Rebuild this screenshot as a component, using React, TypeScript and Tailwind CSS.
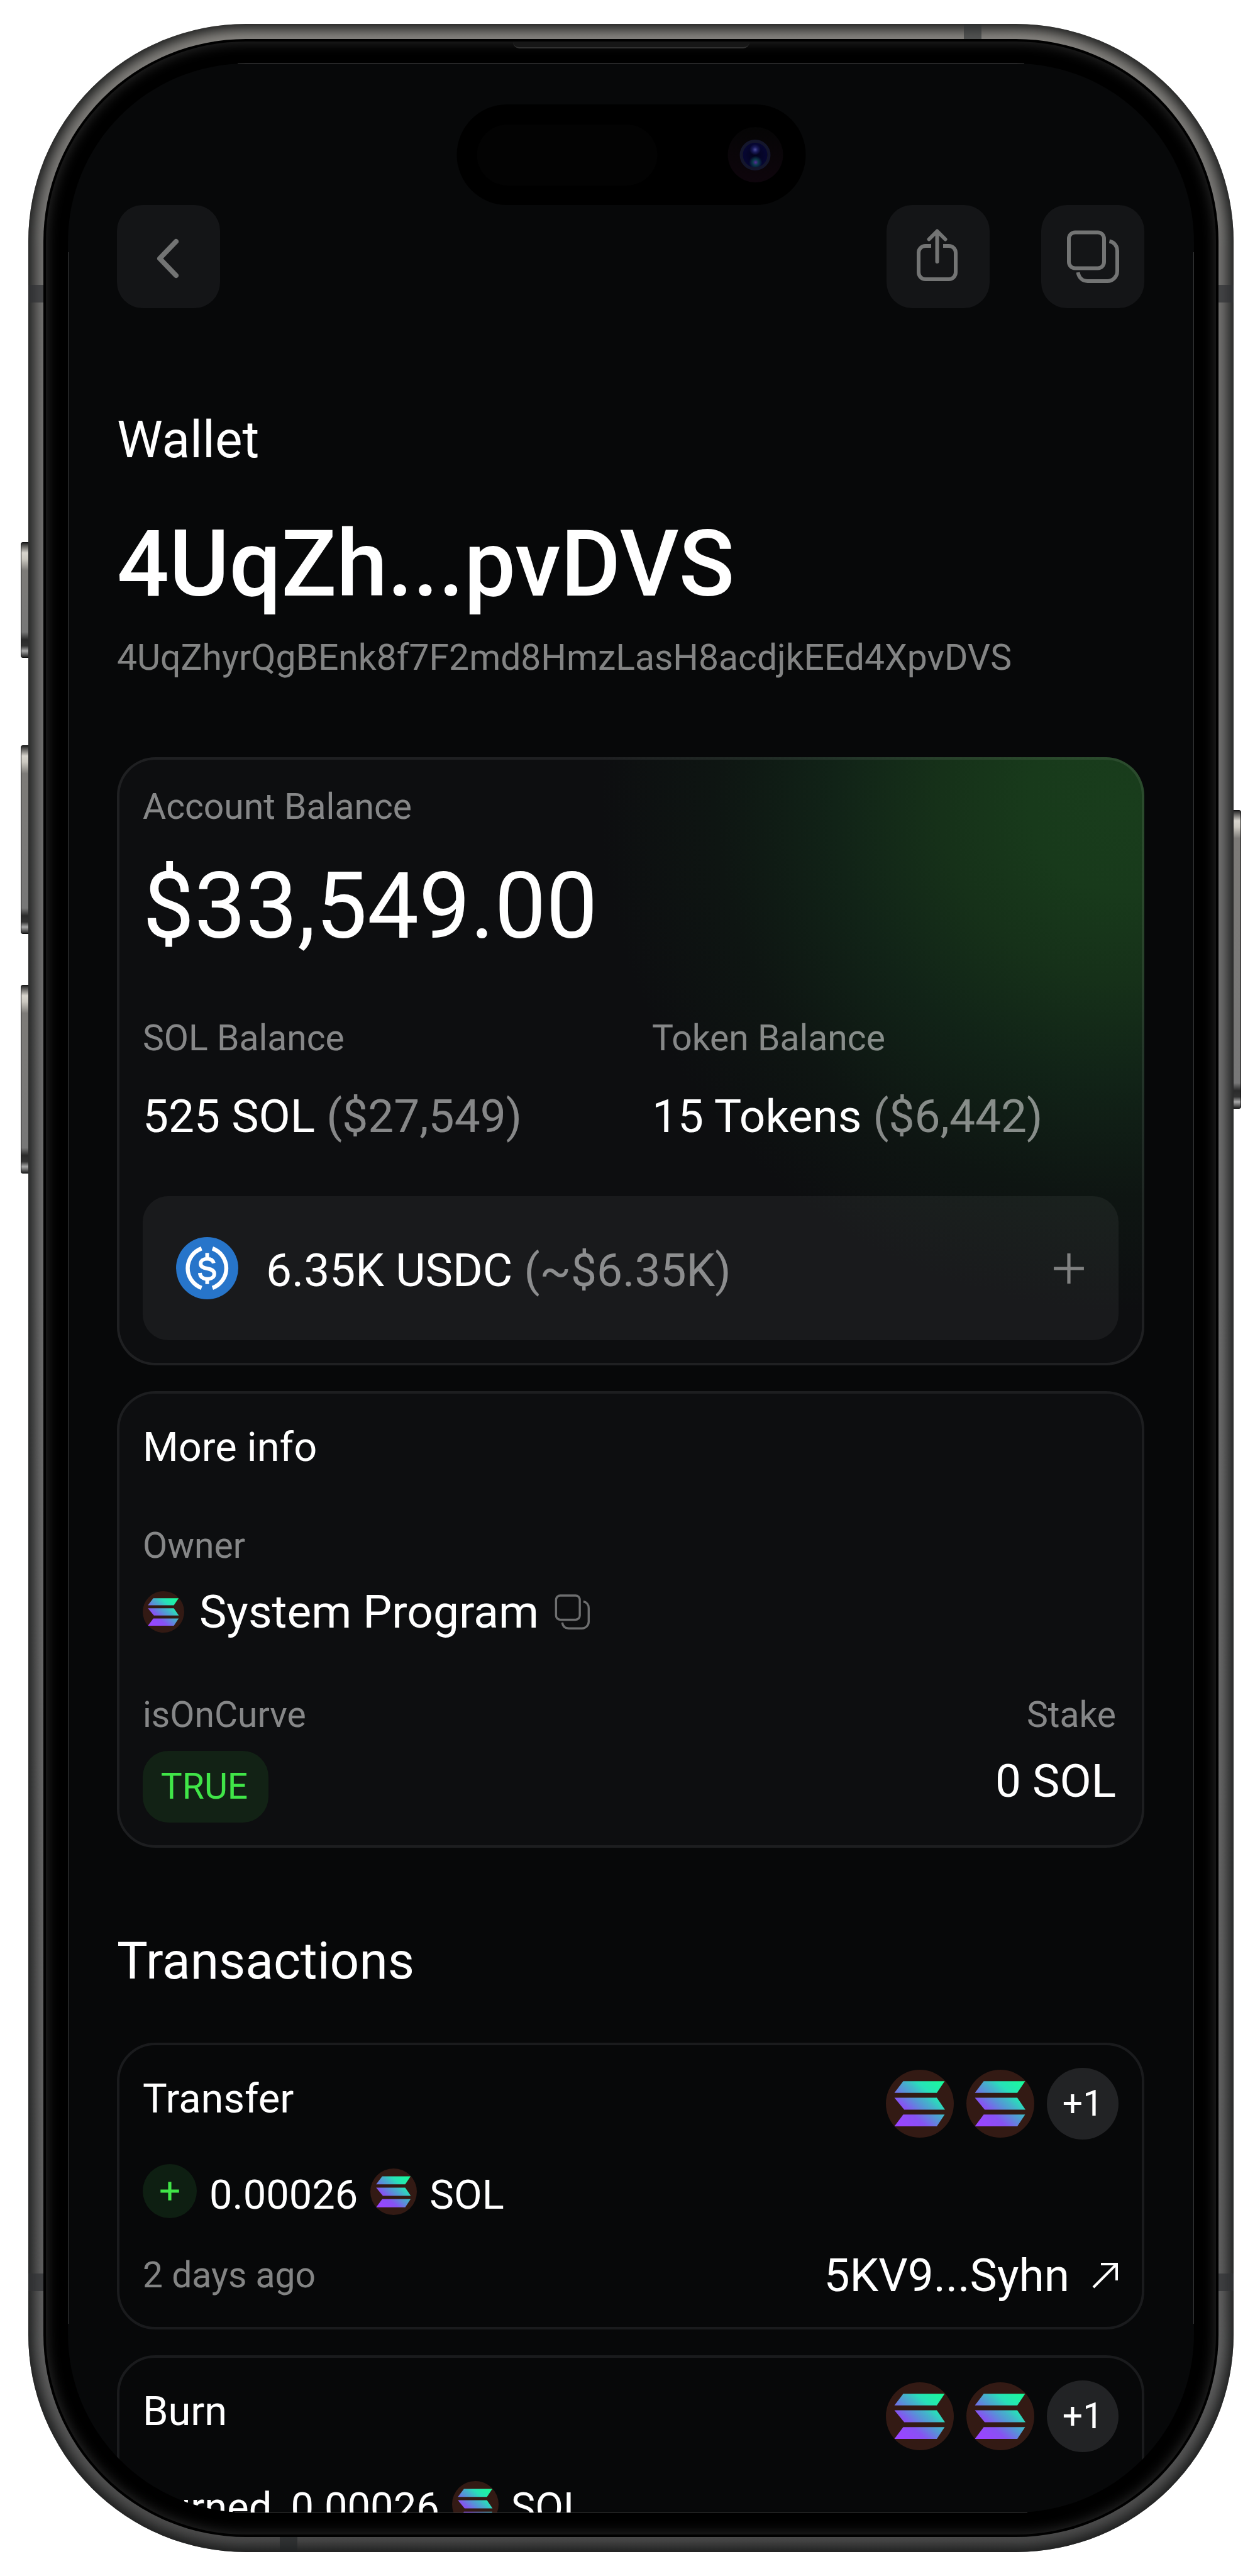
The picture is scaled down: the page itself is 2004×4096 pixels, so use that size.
import React from "react";

function ChevronIcon() {
  return (
    <svg viewBox="0 0 164 164" className="size-full" fill="none" stroke="currentColor" strokeWidth="8" strokeLinecap="round" strokeLinejoin="round" aria-hidden="true">
      <path d="M94 58L68 85L94 112" />
    </svg>
  );
}

function ShareIcon() {
  return (
    <svg viewBox="0 0 164 164" className="size-full" fill="none" stroke="currentColor" strokeWidth="6" aria-hidden="true">
      <path d="M71 65H62a11 11 0 0 0-11 11v31a11 11 0 0 0 11 11h37a11 11 0 0 0 11-11V76a11 11 0 0 0-11-11h-9" />
      <path d="M80.500 42V90M67.500 54.500L80.500 41.500L93.500 54.500" strokeLinecap="round" strokeLinejoin="round" />
    </svg>
  );
}

function CopyShape() {
  return (
    <>
      <rect x="44" y="43.500" width="56" height="57" rx="10" />
      <path d="M108.500 57.500C116 59 121 65 121 73V105a16 16 0 0 1-16 16H74C66 121 60 116 58.500 107" />
    </>
  );
}

function CopyIcon() {
  return (
    <svg viewBox="0 0 164 164" className="size-full" fill="none" stroke="currentColor" strokeWidth="6" aria-hidden="true">
      <CopyShape />
    </svg>
  );
}

function CopySmallIcon() {
  return (
    <svg viewBox="39 39 86 86" className="size-full" fill="none" stroke="currentColor" strokeWidth="5" aria-hidden="true">
      <CopyShape />
    </svg>
  );
}

function SolanaIcon({ id, className }: { id: string; className: string }) {
  return (
    <svg viewBox="0 0 100 100" className={className} role="img" aria-label="Solana">
      <defs>
        <linearGradient id={id} gradientUnits="userSpaceOnUse" x1="18" y1="86" x2="82" y2="14">
          <stop offset="0.08" stopColor="#9945FF" />
          <stop offset="0.3" stopColor="#8752F3" />
          <stop offset="0.5" stopColor="#5497D5" />
          <stop offset="0.6" stopColor="#43B4CA" />
          <stop offset="0.72" stopColor="#28E0B9" />
          <stop offset="0.97" stopColor="#19FB9B" />
        </linearGradient>
      </defs>
      <circle cx="50" cy="50" r="50" fill="#331a14" />
      <g fill={`url(#${id})`}>
        <path d="M25.500 17H86.500L75 34H12.500Z" />
        <path d="M12.500 41.300H75L87 58.700H27Z" />
        <path d="M25.500 66H86.500L75 83.300H12.500Z" />
      </g>
    </svg>
  );
}

function UsdcIcon() {
  return (
    <svg viewBox="0 0 100 100" className="size-[99px] shrink-0" fill="none" stroke="#fff" role="img" aria-label="USDC">
      <circle cx="50" cy="50" r="50" fill="#2775ca" stroke="none" />
      <path strokeWidth="6.500" d="M41 18.300A33.700 33.700 0 0 0 41 81.700M58.500 18.300A33.700 33.700 0 0 1 58.500 81.700" />
      <path strokeWidth="6" d="M60.500 42C59.500 37.500 55.500 35 50 35C43.500 35 39.500 38.500 39.500 43C39.500 47.500 43 49.200 50 50.500C57.500 51.800 61.500 54 61.500 59C61.500 64 57 67.300 50 67.300C43.500 67.300 38.800 64 38.300 57.500M50 25.500V35M50 67V75.500" />
    </svg>
  );
}

function PlusIcon({ className, width }: { className: string; width: number }) {
  return (
    <svg viewBox="0 0 50 50" className={className} fill="none" stroke="currentColor" strokeWidth={width} aria-hidden="true">
      <path d="M25 2V48M2 25H48" />
    </svg>
  );
}

function ArrowIcon() {
  return (
    <svg viewBox="0 0 42 42" className="size-[42px]" fill="none" stroke="currentColor" strokeWidth="4" aria-hidden="true">
      <path d="M2 40L38 4M14 3H39V29" />
    </svg>
  );
}

function IconButton({ label, children }: { label: string; children: React.ReactNode }) {
  return (
    <button type="button" aria-label={label} className="size-[164px] rounded-[41px] bg-[#141517] text-[#737474]">
      {children}
    </button>
  );
}

function Transaction({ id, title, lead }: { id: string; title: string; lead: React.ReactNode }) {
  return (
    <article className="rounded-[61px] border-4 border-[#1a1b1d] px-[37px] pt-[36px] pb-[38px]">
      <div className="flex items-start justify-between">
        <h3 className="pt-[10px] text-[65px] leading-[78px]">{title}</h3>
        <div className="flex items-center gap-5">
          <SolanaIcon id={`${id}-a`} className="size-[108px]" />
          <SolanaIcon id={`${id}-b`} className="size-[108px]" />
          <span className="flex size-[114px] items-center justify-center rounded-full bg-[#222325] text-[57px] leading-[68px]">+1</span>
        </div>
      </div>
      <div className="mt-[39px] flex h-[88px] items-end gap-5 text-[65px] leading-[78px]">
        {lead}
        <span>0.00026</span>
        <SolanaIcon id={`${id}-c`} className="size-[74px] self-center" />
        <span>SOL</span>
      </div>
      <div className="mt-[45px] flex items-center justify-between">
        <p className="text-[57px] leading-[68px] text-white/50">2 days ago</p>
        <a href="#transaction" className="flex items-center gap-9 text-[73px] leading-[88px]">
          5KV9...Syhn
          <ArrowIcon />
        </a>
      </div>
    </article>
  );
}

function SideKey({ className }: { className: string }) {
  return (
    <div
      aria-hidden="true"
      className={`absolute w-6 rounded-[3px] border border-[#111] bg-[linear-gradient(to_bottom,#222_0,#d8d5ce_16px,#cbc8c0_26px,#7d7b78_44px,#777_calc(100%_-_40px),#2a2a2a_calc(100%_-_28px),#333_calc(100%_-_18px),#aaa_calc(100%_-_10px),#222_100%)] ${className}`}
    />
  );
}

export default function App() {
  return (
    <div className="flex h-screen bg-white pt-[38px] pr-[42px] pb-[38px] pl-[45px] font-[Roboto,sans-serif] text-white">
      <div className="relative flex min-h-0 flex-1">
        <SideKey className="-left-3 top-[824px] h-[184px]" />
        <SideKey className="-left-3 top-[1147px] h-[300px]" />
        <SideKey className="-left-3 top-[1528px] h-[300px]" />
        <SideKey className="-right-3 top-[1250px] h-[475px]" />

        <div className="relative flex min-w-0 flex-1 overflow-hidden rounded-[346px] bg-[linear-gradient(to_bottom,#8f8c87_0,#85837f_40px,#757472_360px,#727272_50%,#626262_92%,#4a4a4a_100%)] p-6 shadow-[inset_0_0_20px_9px_#1a1b1b]">
          <div aria-hidden="true" className="absolute top-0 left-[1488px] h-7 w-7 bg-[#2f3234]/60" />
          <div aria-hidden="true" className="absolute bottom-0 left-[400px] h-7 w-7 bg-[#222426]/60" />
          <div aria-hidden="true" className="absolute top-[415px] left-0 h-7 w-7 bg-[#303235]/70" />
          <div aria-hidden="true" className="absolute top-[415px] right-0 h-7 w-7 bg-[#303235]/70" />
          <div aria-hidden="true" className="absolute bottom-[415px] left-0 h-7 w-7 bg-[#303235]/70" />
          <div aria-hidden="true" className="absolute right-0 bottom-[415px] h-7 w-7 bg-[#303235]/70" />

          <div className="relative flex min-w-0 flex-1 rounded-[322px] bg-black p-1">
            <div className="relative flex min-w-0 flex-1 rounded-[318px] bg-black p-[35px] shadow-[inset_0_0_20px_2px_#282828]">
              <div aria-hidden="true" className="absolute top-0 left-1/2 h-[11px] w-[376px] -translate-x-1/2 rounded-b-[10px] border-b-2 border-[#303030] bg-[#161616]" />

              <main className="relative min-w-0 flex-1 overflow-hidden rounded-[284px] bg-[#070809] pt-[225px] pr-[79px] pl-[78px]">
                <div aria-hidden="true" className="absolute inset-x-[270px] top-0 h-px bg-white/30" />
                <div aria-hidden="true" className="absolute inset-y-[300px] left-0 w-px bg-white/20" />
                <div aria-hidden="true" className="absolute inset-y-[300px] right-0 w-px bg-white/20" />

                <div aria-hidden="true" className="absolute top-[65px] left-1/2 flex h-[160px] w-[555px] -translate-x-1/2 items-center justify-between rounded-full bg-black pr-9 pl-8">
                  <div className="h-[97px] w-[287px] rounded-full bg-[#030303]" />
                  <div className="flex size-[88px] items-center justify-center rounded-full bg-[linear-gradient(to_bottom,#050505,#0e050c)]">
                    <div className="size-[49px] rounded-full border-[5px] border-[#14162c] bg-[radial-gradient(circle_at_50%_28%,#4c4e9c_0,#1b1c5c_12%,transparent_26%),radial-gradient(circle_at_52%_80%,#5a2a9a_0,#0c3c4c_12%,transparent_28%),radial-gradient(circle,#03031c_0,#08083c_100%)]" />
                  </div>
                </div>

                <header className="flex justify-between">
                  <IconButton label="Back"><ChevronIcon /></IconButton>
                  <div className="flex gap-[82px]">
                    <IconButton label="Share"><ShareIcon /></IconButton>
                    <IconButton label="Copy address"><CopyIcon /></IconButton>
                  </div>
                </header>

                <p className="mt-[160px] text-[82px] leading-[98px]">Wallet</p>
                <h1 className="mt-[62px] text-[146px] leading-[176px] font-medium">4UqZh...pvDVS</h1>
                <p className="mt-[26px] text-[57px] leading-[68px] text-white/50">4UqZhyrQgBEnk8f7F2md8HmzLasH8acdjkEEd4XpvDVS</p>

                <section className="mt-[124px] rounded-[61px] border-4 border-white/8 bg-[#0d0e10] bg-[radial-gradient(ellipse_51%_84%_at_98%_7%,#193d1c_0%,#183a1b_18%,#163119_35%,#112317_55%,#0e1512_78%,#0d0e10_100%)] bg-origin-border px-[37px] pt-[41px] pb-[36px]">
                  <h2 className="text-[57px] leading-[68px] text-white/50">Account Balance</h2>
                  <p className="mt-[37px] text-[146px] leading-[176px]">$33,549.00</p>
                  <div className="mt-[87px] grid grid-cols-2 gap-[68px] whitespace-nowrap">
                    <div>
                      <h3 className="text-[57px] leading-[68px] text-white/50">SOL Balance</h3>
                      <p className="mt-[46px] text-[73px] leading-[88px]">525 SOL <span className="text-white/50">($27,549)</span></p>
                    </div>
                    <div>
                      <h3 className="text-[57px] leading-[68px] text-white/50">Token Balance</h3>
                      <p className="mt-[46px] text-[73px] leading-[88px]">15 Tokens <span className="text-white/50">($6,442)</span></p>
                    </div>
                  </div>
                  <div className="mt-[83px] flex h-[229px] items-center rounded-[41px] bg-white/5 px-[53px]">
                    <UsdcIcon />
                    <p className="ml-11 flex-1 pt-[6px] text-[73px] leading-[88px]">6.35K USDC <span className="text-white/50">(~$6.35K)</span></p>
                    <button type="button" aria-label="Add token" className="text-[#808181]">
                      <PlusIcon className="size-[52px]" width={5} />
                    </button>
                  </div>
                </section>

                <section className="mt-[41px] rounded-[61px] border-4 border-[#1d1e20] bg-[#0d0e10] px-[37px] pt-[46px] pb-[36px]">
                  <h2 className="text-[65px] leading-[78px]">More info</h2>
                  <h3 className="mt-[84px] text-[57px] leading-[68px] text-white/50">Owner</h3>
                  <div className="mt-[27px] flex items-center gap-6 text-[73px] leading-[88px]">
                    <SolanaIcon id="owner" className="size-[66px]" />
                    <span>System Program</span>
                    <button type="button" aria-label="Copy owner" className="size-[58px] text-white/40"><CopySmallIcon /></button>
                  </div>
                  <div className="mt-[86px] flex justify-between">
                    <div>
                      <h3 className="text-[57px] leading-[68px] text-white/50">isOnCurve</h3>
                      <p className="mt-[23px] flex h-[114px] w-[200px] items-center justify-center rounded-[41px] bg-[#122215] pr-1 text-[57px] leading-[68px] text-[#40e548]">TRUE</p>
                    </div>
                    <div className="pr-1 text-right">
                      <h3 className="text-[57px] leading-[68px] text-white/50">Stake</h3>
                      <p className="mt-[27px] text-[73px] leading-[88px]">0 SOL</p>
                    </div>
                  </div>
                </section>

                <h2 className="mt-[131px] text-[82px] leading-[98px]">Transactions</h2>
                <div className="mt-[81px] flex flex-col gap-[41px]">
                  <Transaction
                    id="transfer"
                    title="Transfer"
                    lead={
                      <span className="flex size-[86px] items-center justify-center self-start rounded-full bg-[#0e1f12] text-[#40e548]">
                        <PlusIcon className="size-[32px]" width={8} />
                      </span>
                    }
                  />
                  <Transaction id="burn" title="Burn" lead={<span className="mr-[10px]">Burned</span>} />
                </div>
              </main>
              <div aria-hidden="true" className="absolute inset-x-[300px] bottom-[34px] h-px bg-white/20" />
            </div>
          </div>
        </div>
      </div>
    </div>
  );
}
